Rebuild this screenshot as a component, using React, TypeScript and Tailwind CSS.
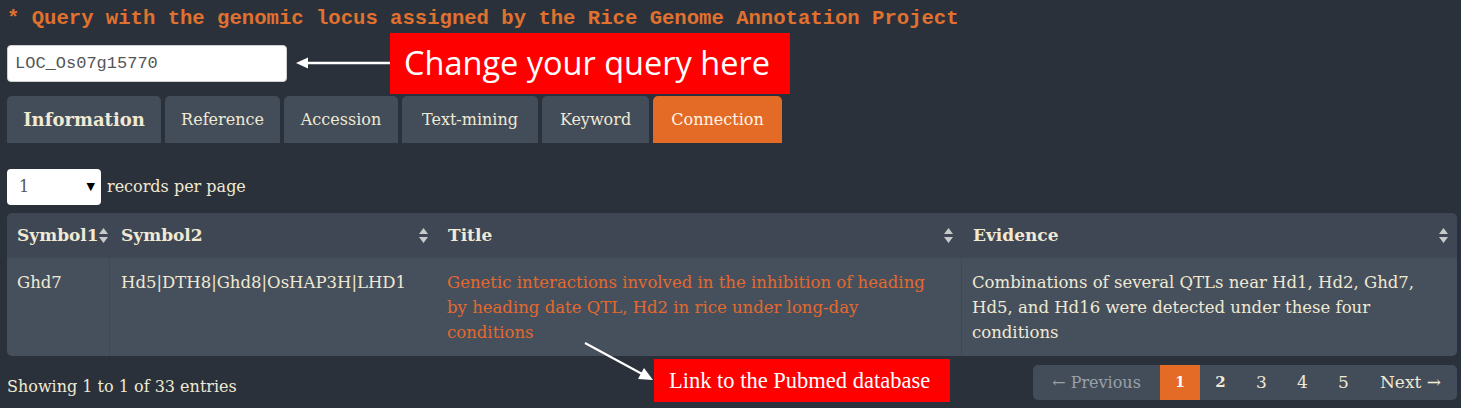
import React from "react";

const cream = "text-[#f0e9d3]";

function SortIcon() {
  return (
    <svg width="9" height="15" viewBox="0 0 9 15" className="shrink-0">
      <path d="M4.5 0 L9 6 L0 6 Z" fill="#c9c9c9" />
      <path d="M0 9 L9 9 L4.5 15 Z" fill="#c9c9c9" />
    </svg>
  );
}

const tabs = [
  { label: "Information", w: "w-[154px]", bold: true },
  { label: "Reference", w: "w-[115px]" },
  { label: "Accession", w: "w-[114px]" },
  { label: "Text-mining", w: "w-[136px]" },
  { label: "Keyword", w: "w-[107px]" },
  { label: "Connection", w: "w-[129px]", active: true },
];

export default function App() {
  return (
    <div
      className="relative w-[1461px] h-[408px] overflow-hidden bg-[#2b313b]"
      style={{ fontFamily: '"DejaVu Serif", "Liberation Serif", serif' }}
    >
      {/* Title */}
      <div
        className="pl-[7px] pt-[6px] h-[33px] text-[20.6px] leading-[26px] font-bold text-[#e0712e] whitespace-nowrap"
        style={{ fontFamily: '"Liberation Mono", "DejaVu Sans Mono", monospace' }}
      >
        * Query with the genomic locus assigned by the Rice Genome Annotation Project
      </div>

      {/* Input row */}
      <div className="h-[63px] pl-[7px] pt-[12px]">
        <div
          className="w-[280px] h-[37px] bg-white rounded-[4px] border border-[#cfcfcf] flex items-center pl-[7px] text-[17px] text-[#555]"
          style={{ fontFamily: '"Liberation Mono", "DejaVu Sans Mono", monospace' }}
        >
          LOC_Os07g15770
        </div>
      </div>

      {/* Tabs */}
      <div className="flex gap-[4px] pl-[7px] h-[47px]">
        {tabs.map((t) => (
          <div
            key={t.label}
            className={
              "h-[47px] rounded-t-[5px] flex items-center justify-center " +
              t.w +
              " " +
              (t.active
                ? "bg-[#e46b25] text-[#fff5ea]"
                : "bg-[#434d5a] text-[#f0e9d3]") +
              (t.bold ? " font-bold text-[18px]" : " text-[16px]")
            }
          >
            {t.label}
          </div>
        ))}
      </div>

      {/* records per page */}
      <div className="flex items-center pl-[7px] pt-[26px] gap-[6px]">
        <div className="w-[94px] h-[36px] bg-white rounded-[4px] flex items-center justify-between pl-[12px] pr-[6px] text-[16px] text-[#555]">
          <span>1</span>
          <span className="text-[11px] text-black">▼</span>
        </div>
        <span className={"text-[16px] " + cream}>records per page</span>
      </div>

      {/* Table */}
      <div className="mx-[7px] mt-[8px] w-[1450px] rounded-[5px] overflow-hidden">
        <div className="grid grid-cols-[103px_327px_525px_495px] bg-[#3e4753] h-[45px]">
          {["Symbol1", "Symbol2", "Title", "Evidence"].map((h, i) => (
            <div
              key={h}
              className={
                "flex items-center justify-between font-bold text-[17px] " +
                cream +
                (i === 0 ? " pl-[10px] pr-[3px]" : " pl-[11px] pr-[9px]")
              }
            >
              <span className="whitespace-nowrap">{h}</span>
              <SortIcon />
            </div>
          ))}
        </div>
        <div className="grid grid-cols-[103px_327px_525px_495px] bg-[#46505d] h-[98px] text-[16.5px] leading-[25px]">
          <div className={"pl-[10px] pt-[12px] border-r border-[#3f4954] " + cream}>Ghd7</div>
          <div className={"pl-[11px] pt-[12px] " + cream}>Hd5|DTH8|Ghd8|OsHAP3H|LHD1</div>
          <div className="pl-[10px] pr-[20px] pt-[12px] text-[#e3692d] border-r border-[#3f4954]">
            Genetic interactions involved in the inhibition of heading by heading date QTL, Hd2 in rice under long-day conditions
          </div>
          <div className={"pl-[10px] pr-[30px] pt-[12px] " + cream}>
            Combinations of several QTLs near Hd1, Hd2, Ghd7, Hd5, and Hd16 were detected under these four conditions
          </div>
        </div>
      </div>

      {/* Footer */}
      <div className="flex items-center justify-between pl-[7px] pr-[4px] mt-[9px]">
        <span className={"text-[16px] pt-[8px] " + cream}>Showing 1 to 1 of 33 entries</span>
        <div className="flex items-center h-[35px] w-[424px] bg-[#434d5a] rounded-[5px] overflow-hidden text-[16px]">
          <div className="w-[127px] h-full flex items-center justify-center text-[#9aa0a8]">← Previous</div>
          <div className="w-[40px] h-full flex items-center justify-center bg-[#e46b25] text-white font-bold text-[14px]">1</div>
          <div className={"w-[41px] h-full flex items-center justify-center font-bold text-[15px] " + cream}>2</div>
          <div className={"w-[41px] h-full flex items-center justify-center text-[17px] " + cream}>3</div>
          <div className={"w-[41px] h-full flex items-center justify-center text-[17px] " + cream}>4</div>
          <div className={"w-[41px] h-full flex items-center justify-center text-[17px] " + cream}>5</div>
          <div className={"flex-1 h-full flex items-center justify-center text-[17px] " + cream}>Next →</div>
        </div>
      </div>

      {/* Annotation: Change your query here */}
      <svg className="absolute left-[295px] top-[56px]" width="96" height="14" viewBox="0 0 96 14">
        <line x1="10" y1="7" x2="96" y2="7" stroke="white" strokeWidth="2.5" />
        <path d="M1 7 L13 1.5 L13 12.5 Z" fill="white" />
      </svg>
      <div
        className="absolute left-[390px] top-[33px] w-[400px] h-[61px] bg-[#ff0000] flex items-center pl-[14px] text-white text-[32.5px]"
        style={{ fontFamily: '"Open Sans", "Noto Sans", sans-serif' }}
      >
        Change your query here
      </div>

      {/* Annotation: Pubmed */}
      <svg className="absolute left-[580px] top-[338px]" width="76" height="46" viewBox="0 0 76 46">
        <line x1="5" y1="5" x2="64" y2="37" stroke="white" strokeWidth="2" />
        <path d="M73 42 L58 41 L64 30 Z" fill="white" />
      </svg>
      <div
        className="absolute left-[654px] top-[359px] w-[296px] h-[43px] bg-[#ff0000] flex items-center pl-[15px] text-white text-[22.5px]"
        style={{ fontFamily: '"Liberation Serif", serif' }}
      >
        Link to the Pubmed database
      </div>
    </div>
  );
}
